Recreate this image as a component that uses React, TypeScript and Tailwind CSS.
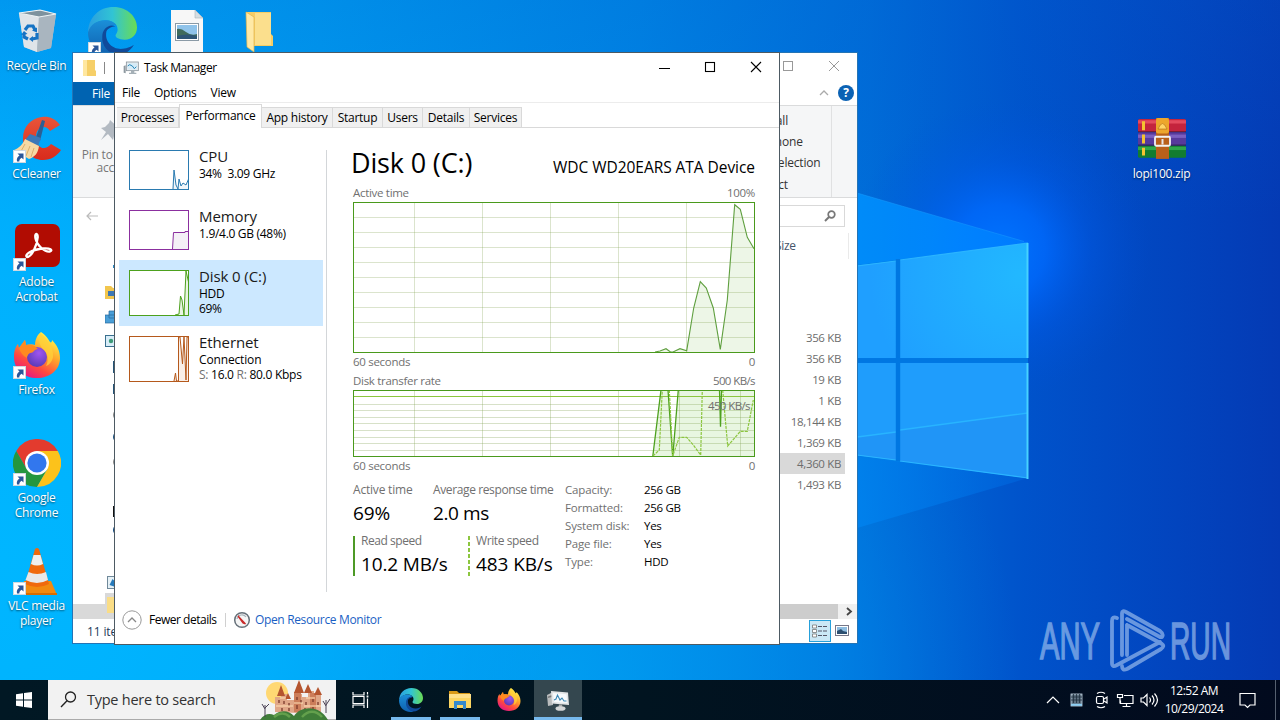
import type { ReactNode } from "react";

/* ---------- wallpaper ---------- */
function Wallpaper() {
  return (
    <svg className="absolute inset-0" width="1280" height="720" viewBox="0 0 1280 720">
      <defs>
        <linearGradient id="base" x1="0" x2="1" y1="0" y2="0">
          <stop offset="0" stopColor="#00a6f8" />
          <stop offset="0.25" stopColor="#009aef" />
          <stop offset="0.5" stopColor="#0084e4" />
          <stop offset="0.68" stopColor="#006cd8" />
          <stop offset="0.8" stopColor="#0053cb" />
          <stop offset="0.92" stopColor="#0244be" />
          <stop offset="1" stopColor="#043ab4" />
        </linearGradient>
        <radialGradient id="glow" gradientUnits="userSpaceOnUse" cx="1000" cy="250" r="150">
          <stop offset="0" stopColor="#0074ff" />
          <stop offset="0.3" stopColor="#006aff" stopOpacity="0.8" />
          <stop offset="0.6" stopColor="#005cf0" stopOpacity="0.35" />
          <stop offset="1" stopColor="#0050d8" stopOpacity="0" />
        </radialGradient>
        <radialGradient id="corner" gradientUnits="userSpaceOnUse" cx="0" cy="560" r="560">
          <stop offset="0" stopColor="#00b6ff" />
          <stop offset="0.5" stopColor="#00b4ff" stopOpacity="0.8" />
          <stop offset="1" stopColor="#00b0ff" stopOpacity="0" />
        </radialGradient>
        <radialGradient id="floor" gradientUnits="userSpaceOnUse" cx="560" cy="680" r="460">
          <stop offset="0" stopColor="#00a4f4" stopOpacity="0.75" />
          <stop offset="0.6" stopColor="#0098f0" stopOpacity="0.4" />
          <stop offset="1" stopColor="#0080e8" stopOpacity="0" />
        </radialGradient>
        <linearGradient id="topdark" x1="0" x2="0" y1="0" y2="1">
          <stop offset="0" stopColor="#0060d0" stopOpacity="0.2" />
          <stop offset="0.3" stopColor="#0060d0" stopOpacity="0" />
        </linearGradient>
        <linearGradient id="beam" gradientUnits="userSpaceOnUse" x1="780" y1="0" x2="1030" y2="0">
          <stop offset="0" stopColor="#0096ff" />
          <stop offset="0.6" stopColor="#008cff" />
          <stop offset="1" stopColor="#007cff" />
        </linearGradient>
        <linearGradient id="beamLow" gradientUnits="userSpaceOnUse" x1="780" y1="0" x2="1020" y2="0">
          <stop offset="0" stopColor="#008cf2" />
          <stop offset="1" stopColor="#0070e8" stopOpacity="0.4" />
        </linearGradient>
        <radialGradient id="pane" gradientUnits="userSpaceOnUse" cx="1020" cy="275" r="150">
          <stop offset="0" stopColor="#22b8ff" />
          <stop offset="1" stopColor="#1f9fff" />
        </radialGradient>
      </defs>
      <rect width="1280" height="720" fill="url(#base)" />
      <rect width="1280" height="720" fill="url(#topdark)" />
      <rect width="1280" height="720" fill="url(#floor)" />
      <rect width="1280" height="720" fill="url(#corner)" />
      <rect width="1280" height="720" fill="url(#glow)" />
      <path d="M780 170L857 193L1028 243L857 266H780z" fill="url(#beam)" opacity=".85" />
      <path d="M780 170L857 193L1024 241.500" stroke="#18a0ff" strokeOpacity=".5" fill="none" />
      <path d="M780 380L857 397L1028 478L857 528L780 550z" fill="url(#beamLow)" />
      <path d="M780 275L1028 243V478L780 447z" fill="#007fe8" />
      <path d="M780 274L896 261V358H780zM900 260L1028 243V358H900z" fill="url(#pane)" />
      <path d="M780 363H896V460L780 446zM900 363H1028V478L900 461z" fill="#1f9dfc" />
      <path d="M780 446L896 432V460L780 446zM900 430L1028 413V478L900 461z" fill="#218ff4" opacity=".6" />
      <path d="M857 437L896 432M900 430L1028 413" stroke="#28b4ff" strokeWidth="1.400" />
      <path d="M857 266L896 261M900 260L1028 243M900 461L1028 478M857 455L896 460" stroke="#2bb5ff" strokeWidth="1.200" />
      <path d="M857 360.500H1028M898 259V461" stroke="#0077e2" strokeWidth="4.400" />
      <path d="M1027.500 243V358M1027.500 363V479" stroke="#46d2ff" strokeWidth="2" />
    </svg>
  );
}

/* ---------- icons ---------- */
function Shortcut({ y = 31 }: { y?: number }) {
  return (
    <g transform={`translate(1 ${y})`}>
      <rect x="-.5" y="-.5" width="12" height="12" fill="#fff" stroke="#cfd8e0" />
      <path d="M3.500 2.500h6v6L7.600 6.700C6.200 7.500 5.300 8.500 5.300 10.500H3C2.300 7.700 3.700 5.500 5.500 4.500z" fill="#2a5699" />
    </g>
  );
}

function EdgeIcon({ size }: { size: number }) {
  return (
    <svg width={size} height={size} viewBox="0 0 48 48">
      <defs>
        <linearGradient id="eg1" x1="0" x2="1" y1="0" y2="0">
          <stop offset="0" stopColor="#2a9ee0" />
          <stop offset=".5" stopColor="#31c4d4" />
          <stop offset="1" stopColor="#6bdc52" />
        </linearGradient>
        <linearGradient id="eg2" x1="0" x2="0" y1="0" y2="1">
          <stop offset="0" stopColor="#1b8fd8" />
          <stop offset="1" stopColor="#0f5fae" />
        </linearGradient>
      </defs>
      <path d="M0 26C0 10 11 0 25 0s23 10 23 20c0 7-5 12-12 12-6 0-9-2-9-4 0-1.500 2-2.500 2-6 0-5-5-9-12-9C9 13 2 18 0 26z" fill="url(#eg1)" />
      <path d="M0 25C2 17 9 13 17 13c5 0 9 2 11 5-6-2-12 3-12 11 0 8 5 16 13 18-2 .7-4 1-6 1C10 48 0 38 0 25z" fill="url(#eg2)" />
      <path d="M18 24c-2 10 6 18 16 17 5-.5 8-2 11-4-4 7-10 10-16 10-9-1-16-9-15-18 0-7 6-13 13-10-4 0-8 2-9 5z" fill="#104a9a" />
    </svg>
  );
}

function FirefoxIcon({ size }: { size: number }) {
  return (
    <svg width={size} height={size} viewBox="0 0 48 48">
      <defs>
        <linearGradient id="ff1" x1=".8" x2=".25" y1=".1" y2="1">
          <stop offset="0" stopColor="#fff14a" />
          <stop offset=".35" stopColor="#ffa62b" />
          <stop offset=".68" stopColor="#ff4a3f" />
          <stop offset="1" stopColor="#e3128a" />
        </linearGradient>
        <radialGradient id="ff2" cx=".6" cy=".3" r=".8">
          <stop offset="0" stopColor="#a055f0" />
          <stop offset="1" stopColor="#5238b0" />
        </radialGradient>
      </defs>
      <path d="M28 0c5 3 7 7 9 10 1 1 2 0 2-2 5 5 8 11 8 18 0 12-10 20-23 20S1 38 1 25c0-7 2-11 4-13l1 4 6-8 1 5c4-1 7-1 9 0 0-5 2-10 6-13z" fill="url(#ff1)" />
      <circle cx="24" cy="25" r="10" fill="url(#ff2)" />
      <path d="M6 16l6-8 1 5c5-1 9 0 12 4-4 0-4 4-8 4-2 1-3 3-3 5-4-2-7-6-8-10z" fill="#ff8a1f" />
      <path d="M27 1c6 5 14 13 13 24-1 5-4 8-7 9 3-6 2-13-3-17-4-4-5-11-3-16z" fill="#ffd23a" opacity=".75" />
    </svg>
  );
}

function RecycleBin() {
  return (
    <svg width="48" height="48" viewBox="0 0 48 48">
      <path d="M6 5L27 2L43 6L38 40L24 44L11 39z" fill="#b9c6d0" />
      <path d="M6 5L26 8L24 44L11 39z" fill="#dfe4e9" />
      <path d="M26 8L43 6L38 40L24 44z" fill="#a9b5bf" />
      <path d="M6 5L27 2L43 6L26 9z" fill="#7e929e" stroke="#eef3f5" strokeWidth="1.200" />
      <g fill="none" stroke="#1673c4" strokeWidth="3.200">
        <path d="M12 22l3-4 5 0 2 4M24 25l0 5-5 1M15 31l-4-2 0-3" />
      </g>
      <path d="M19 22.500l5 2 0-5zM20 28v6l-4-3zM8 27l3-4 3.500 3z" fill="#1673c4" />
    </svg>
  );
}

function CCleaner() {
  return (
    <svg width="48" height="48" viewBox="0 0 48 48">
      <defs>
        <linearGradient id="cc" x1="0" x2="0" y1="0" y2="1">
          <stop offset="0" stopColor="#e8553a" />
          <stop offset="1" stopColor="#d92b1c" />
        </linearGradient>
      </defs>
      <path d="M47 9C42 2 35 0 29 1 18 2 10 11 10 22c0 13 9 22 20 22 8 0 14-4 18-10l-10-6c-4 5-9 5-12 2-4-4-4-14 0-17 4-3 8-3 11 2z" fill="url(#cc)" />
      <path d="M29 4l3 1-5 20-5-1z" fill="#2b5f94" />
      <path d="M17 18l11 4-3 8-13-6z" fill="#3c78b8" />
      <path d="M12 23l14 7c-1 7-4 11-10 13L1 34c5-2 9-6 11-11z" fill="#f6d9a4" />
      <path d="M12 28l-5 9M17 30l-4 10M21 32l-3 9" stroke="#dcaf6c" />
      <Shortcut y={35} />
    </svg>
  );
}

function Acrobat() {
  return (
    <svg width="48" height="48" viewBox="0 0 48 48">
      <rect x="2" y="0" width="45" height="43" rx="7" fill="#b10c02" />
      <path d="M14 33C11 31 18 26 29 24.500c9-1 11 2 8 3-5 1-13-6-14.500-13-1.200-6 2.500-6 2.200-1C24.300 20 19 33 14 33z" fill="none" stroke="#fff" strokeWidth="2.300" strokeLinejoin="round" />
      <Shortcut y={35} />
    </svg>
  );
}

function Chrome() {
  return (
    <svg width="48" height="48" viewBox="0 0 48 48">
      <path d="M3.200 12A24 24 0 0 1 44.800 12L24 12L13.600 30z" fill="#e33b2e" />
      <path d="M3.200 12A24 24 0 0 0 24 48L34.400 30L13.600 30z" fill="#24963f" />
      <path d="M44.800 12A24 24 0 0 1 24 48L34.400 30L24 12z" fill="#fcc21b" />
      <circle cx="24" cy="24" r="12" fill="#fff" />
      <circle cx="24" cy="24" r="9.600" fill="#3277ee" />
      <Shortcut y={35} />
    </svg>
  );
}

function Vlc() {
  return (
    <svg width="48" height="48" viewBox="0 0 48 48">
      <path d="M11 33H38L44 47H9z" fill="#f28a0f" />
      <path d="M6 45H44V47H6z" fill="#d96d00" />
      <path d="M22 1Q24-1 26 1L36 36Q24 42 12 36z" fill="#f0690c" />
      <path d="M20.500 7H27.500L30 16Q24 19 18 16z" fill="#efefef" />
      <path d="M15.500 24Q24 28 33 24L35 32Q24 38 12.500 32z" fill="#e8e8e8" />
      <Shortcut y={35} />
    </svg>
  );
}

function WinRar() {
  return (
    <svg className="mt-[2px]" width="50" height="42" viewBox="0 0 50 38" preserveAspectRatio="none">
      <rect x="1" y="1" width="48" height="12" rx="1.500" fill="#c4243d" />
      <rect x="1" y="2" width="48" height="3" fill="#e34a5e" />
      <rect x="1" y="13" width="48" height="12" rx="1.500" fill="#573a9c" />
      <rect x="1" y="15" width="48" height="3" fill="#7b5fc0" />
      <rect x="1" y="25" width="48" height="11" rx="1.500" fill="#127c2f" />
      <rect x="1" y="26" width="48" height="3" fill="#2fa64b" />
      <path d="M5 3h3v8H5zM5 15h3v8H5zM5 27h3v7H5z" fill="#f5c330" />
      <path d="M1 12.500H49M1 24.500H49" stroke="#23182f" strokeOpacity=".6" />
      <rect x="19" y="0" width="13" height="37" fill="#b9601a" />
      <rect x="19" y="0" width="13" height="14" rx="2" fill="#eda62c" />
      <path d="M21 10Q25.500 0 30 10z" fill="#ffd466" stroke="#b9741a" strokeWidth=".7" />
      <rect x="18" y="17" width="15" height="8" rx="1" fill="none" stroke="#f3f3f3" strokeWidth="1.800" />
      <path d="M25.500 19v5" stroke="#e7e7e7" strokeWidth="2" />
    </svg>
  );
}

function PictureFile() {
  return (
    <svg width="34" height="44" viewBox="0 0 34 44">
      <path d="M1 0H25L33 8V44H1z" fill="#f7f7f7" />
      <path d="M25 0V8H33z" fill="#d5dde2" stroke="#aab5bc" strokeWidth=".6" />
      <rect x="5.500" y="13.500" width="23" height="17" fill="#fff" stroke="#8a9aa6" />
      <rect x="7" y="15" width="20" height="14" fill="#8fc3ea" />
      <path d="M7 19q4-1 9 3t11 2v5H7z" fill="#3f6b5c" />
      <path d="M7 26q10-3 20 0v3H7z" fill="#2d5576" />
    </svg>
  );
}

function FolderTall() {
  return (
    <svg width="28" height="42" viewBox="0 0 28 42">
      <path d="M1 1H26V23L28 25V35H5z" fill="#f5cd66" />
      <path d="M10 2H26V34H10z" fill="#fbdf8d" />
      <path d="M1 1L9 6V41L2 36z" fill="#ffe9a6" stroke="#e2b54a" strokeWidth=".7" />
    </svg>
  );
}

function MonitorIcon({ size }: { size: number }) {
  return (
    <svg width={size} height={size} viewBox="0 0 24 24">
      <path d="M1 9L4 8V20L1 19z" fill="#8d989f" />
      <rect x="5" y="3" width="18" height="13" fill="#e9eef1" stroke="#87939b" strokeWidth="1.200" />
      <rect x="7" y="5" width="14" height="9" fill="#d4ebf7" />
      <path d="M7 9l3-2 4 2 3 4 3-3" fill="none" stroke="#2b87b8" strokeWidth="1.500" />
      <path d="M12 16h5v3h3v2H9v-2h3z" fill="#a5b0b7" />
    </svg>
  );
}

function TaskManagerTile() {
  return (
    <svg width="24" height="24" viewBox="0 0 24 24">
      <path d="M1 7L7 4V17L2 18z" fill="#b9bcbd" />
      <path d="M2 8.500L6 7V9L2 10z" fill="#77797a" />
      <path d="M5 3L22 4.500L23 17L6 15.500z" fill="#e3e5e6" />
      <path d="M7 5L20.500 6.200L21.200 15L8 14z" fill="#f7fafc" />
      <path d="M8 12l2-1 1.500-4 2.500 5 2-2 2 3 2.500 0" fill="none" stroke="#3b87b4" strokeWidth="1.100" />
      <path d="M13 16.500h3l.5 2.500h-4z" fill="#aaa" />
      <ellipse cx="14.500" cy="20.500" rx="5" ry="2.300" fill="#d4d6d7" />
    </svg>
  );
}

function ExplorerIcon() {
  return (
    <svg width="24" height="22" viewBox="0 0 24 22">
      <path d="M1 2H9L11 4H22V8H1z" fill="#d99a18" />
      <path d="M1 5H23V19H1z" fill="#fcd561" />
      <path d="M1 5H23V9H1z" fill="#ffe08a" />
      <path d="M6 20V12H18V20H15V16H9V20z" fill="#3488cc" />
    </svg>
  );
}

/* ---------- desktop ---------- */
function DesktopIcon({ place, label, children }: { place: string; label: ReactNode; children: ReactNode }) {
  return (
    <div className={`absolute flex w-[74px] flex-col items-center ${place}`}>
      <div className="flex h-[50px] items-start justify-center">{children}</div>
      <div className="pr-px text-center text-[12px] leading-[15px] tracking-[-0.25px] whitespace-nowrap text-white [text-shadow:0_1px_2px_rgba(0,0,0,.6)]">
        {label}
      </div>
    </div>
  );
}

/* ---------- file explorer ---------- */
const sizes = ["356 KB", "356 KB", "19 KB", "1 KB", "18,144 KB", "1,369 KB", "4,360 KB", "1,493 KB"];

function Explorer() {
  return (
    <div className="absolute top-[52px] left-[72px] flex h-[592px] w-[786px] flex-col border border-[#2474b5] bg-white text-[12px] text-[#333]">
      <div className="flex h-[29px] shrink-0 items-center">
        <svg className="ml-[9px]" width="15" height="18" viewBox="0 0 15 18">
          <path d="M1 1H13V11L14 12V17H1z" fill="#f6cf68" />
          <path d="M1 1H5V17H1z" fill="#ffe7a0" />
        </svg>
        <span className="ml-[7px] h-[12px] w-px bg-[#888]" />
        <span className="grow" />
        <svg className="mr-[15px] mb-[3px]" width="62" height="12" viewBox="0 0 62 12">
          <rect x="3.500" y="1.500" width="9" height="9" fill="none" stroke="#999" />
          <path d="M49 1l10 10M59 1l-10 10" stroke="#999" fill="none" />
        </svg>
      </div>
      <div className="flex h-[23px] shrink-0 items-center">
        <div className="flex h-full w-[56px] items-center justify-center bg-[#0063b1] tracking-[-0.2px] text-white">File</div>
        <span className="grow" />
        <svg className="mr-[9px] mb-px" width="10" height="6" viewBox="0 0 10 6">
          <path d="M1 5l4-4 4 4" fill="none" stroke="#aaa" strokeWidth="1.300" />
        </svg>
        <div className="mr-[3px] mb-px flex h-[16px] w-[16px] items-center justify-center rounded-full bg-[#0b62b4] text-[12px] font-bold text-white">?</div>
      </div>
      <div className="flex h-[93px] shrink-0 justify-between border-y border-[#dadbdc] bg-[#f5f6f7]">
        <div className="flex w-[82px] flex-col items-center pt-[13px] leading-[13px] tracking-[-0.2px] whitespace-nowrap text-[#777]">
          <svg className="mr-[6px] mb-[7px]" width="22" height="22" viewBox="0 0 22 22">
            <path d="M10 1l12 11-4 1-4 4-1 4-5-6-7 6 5-8-5-4 4-1 4-4z" fill="#b3bac2" />
          </svg>
          <span>Pin to Quick</span>
          <span>access</span>
        </div>
        <div className="mr-[25px] flex w-[100px] flex-col border-r border-[#e0e1e2] pt-[4px] tracking-[-0.2px] whitespace-nowrap">
          <span className="flex h-[22px] items-center pl-[9px]">Select all</span>
          <span className="flex h-[22px] items-center pl-[8px]">Select none</span>
          <span className="flex h-[22px] items-center pl-[6px]">Invert selection</span>
          <span className="flex h-[24px] items-center pl-[24px]">Select</span>
        </div>
      </div>
      <div className="flex h-[35px] shrink-0 items-center justify-between">
        <svg className="ml-[13px]" width="13" height="10" viewBox="0 0 13 10">
          <path d="M5 1L1 5l4 4M1 5h11" fill="none" stroke="#bbb" strokeWidth="1.200" />
        </svg>
        <div className="mr-[12px] flex h-[22px] w-[160px] items-center justify-end border border-[#d9d9d9] pr-[8px]">
          <svg width="12" height="12" viewBox="0 0 12 12">
            <circle cx="7.500" cy="4.500" r="3.300" fill="none" stroke="#777" strokeWidth="1.700" />
            <path d="M5 7L1 11" stroke="#777" strokeWidth="1.900" />
          </svg>
        </div>
      </div>
      <div className="flex h-[371px] shrink-0">
        <div className="flex w-[50px] flex-col items-end">
          <svg width="18" height="371" viewBox="0 0 18 371">
            <path d="M8 32h10v3H8z" fill="#2b8bc8" />
            <path d="M0 53h6l2 2h10v11H0z" fill="#f2c64e" />
            <path d="M3 58h15v8h-4v-3H3z" fill="#3d78b5" />
            <path d="M4 78h14v7H4zM0 82h14v8H0z" fill="#4a9fd8" stroke="#27689c" strokeWidth=".7" />
            <rect x=".5" y="102.500" width="16" height="11" fill="#d8edf8" stroke="#39708f" />
            <circle cx="6" cy="108" r="2.200" fill="#3d9a78" />
            <path d="M8 128h10v12H8zM8 151h10v10H8z" fill="#245376" />
            <circle cx="14" cy="182" r="6" fill="#888" />
            <circle cx="14" cy="204" r="6" fill="#174f80" />
            <circle cx="14" cy="229" r="6" fill="#888" />
            <circle cx="14" cy="250" r="5" fill="#3c7f88" />
            <path d="M8 273h10v11H8z" fill="#111" />
            <circle cx="14" cy="297" r="6" fill="#0d457c" />
            <circle cx="14" cy="328" r="5" fill="#999" />
            <rect x="2.500" y="343.500" width="14" height="12" fill="#e6f1f6" stroke="#70899a" />
            <path d="M4.500 352l3-6 3 3v5z" fill="#267abb" />
            <path d="M0 360h18v11H0z" fill="#d9d9d9" />
            <path d="M2 364h16v7H2z" fill="#fadd86" />
          </svg>
        </div>
        <div className="ml-auto flex w-[150px] flex-col tracking-[-0.2px]">
          <div className="mr-[8px] mb-[68px] flex h-[26px] items-center border-r border-[#eaeaea] text-[#44546a]">
            <span className="ml-[68px] tracking-[-0.35px]">Size</span>
          </div>
          {sizes.map((s, i) => (
            <div key={i} className={`mr-[12px] flex h-[21px] items-center justify-end pr-[4px] text-[11.5px] tracking-[-0.35px] text-[#6d6d6d] ${i === 6 ? "bg-[#d9d9d9]" : ""}`}>
              {s}
            </div>
          ))}
        </div>
      </div>
      <div className="flex h-[15px] shrink-0">
        <div className="w-[200px] bg-[#d9d9d9]">
          <div className="ml-[34px] h-[9px] w-[16px] bg-[#fadd86]" />
        </div>
        <div className="ml-auto w-[165px] bg-[#cdcdcd]" />
        <div className="flex w-[19px] items-center justify-center bg-[#f0f0f0] pl-[3px]">
          <svg width="7" height="9" viewBox="0 0 7 9">
            <path d="M1 1l4 3.500L1 8" fill="none" stroke="#444" strokeWidth="1.800" />
          </svg>
        </div>
      </div>
      <div className="flex grow items-center justify-between">
        <span className="pt-px pl-[14px] tracking-[-0.15px] text-[#1e395b]">11 items</span>
        <div className="flex items-center gap-[3px] pr-[7px]">
          <div className="flex h-[22px] w-[22px] items-center justify-center border border-[#26a0da] bg-[#cbe8f6]">
            <svg width="16" height="14" viewBox="0 0 16 14">
              <path d="M.5 1h4v3h-4zM.5 5.500h4v3h-4zM.5 10h4v3h-4z" fill="#fff" stroke="#777" strokeWidth=".8" />
              <path d="M6 2.500h4M11 2.500h4M6 7h4M11 7h4M6 11.500h4M11 11.500h4" stroke="#556" />
            </svg>
          </div>
          <svg width="16" height="12" viewBox="0 0 16 12">
            <rect x="1.500" y=".5" width="13" height="10" fill="#fff" stroke="#778" />
            <rect x="3" y="2" width="10" height="7" fill="#8fbde0" />
            <path d="M3 6l4-2 2 2 4 1v2H3z" fill="#2d4f70" />
          </svg>
        </div>
      </div>
    </div>
  );
}

/* ---------- task manager ---------- */
const tabs = [
  { name: "Processes", w: "w-[62px]" },
  { name: "Performance", w: "w-[83px]" },
  { name: "App history", w: "w-[71px]" },
  { name: "Startup", w: "w-[50px]" },
  { name: "Users", w: "w-[40px]" },
  { name: "Details", w: "w-[47px]" },
  { name: "Services", w: "w-[52px]" },
];

function Thumb({ h, color, fill, line }: { h: number; color: string; fill: string; line: string }) {
  return (
    <svg className="shrink-0" width="60" height={h} viewBox={`0 0 60 ${h}`}>
      <rect x=".5" y=".5" width="59" height={h - 1} fill="#fff" />
      <path d={`${line}V${h}H44z`} fill={fill} />
      <path d={line} fill="none" stroke={color} />
      <rect x=".5" y=".5" width="59" height={h - 1} fill="none" stroke={color} />
    </svg>
  );
}

function ActiveChart() {
  const line =
    "M302 150L307 149L313 146.700L317.500 150H320L327 146.700L333.700 148.700L340.700 106L347.300 79.700L353.300 86L360.300 106L367.300 147.300L374.300 98L381.700 2.700L387.300 7.300L394.300 35.300L401 46.700";
  return (
    <svg className="block" width="402" height="151" viewBox="0 0 402 151">
      <rect width="402" height="151" fill="#fff" />
      <path d={`${line}V150H302z`} fill="#edf6e7" />
      <path
        d="M0 15.500H401M0 30.500H401M0 45.500H401M0 60.500H401M0 75.500H401M0 90.500H401M0 105.500H401M0 120.500H401M0 135.500H401M61.500 0V150M129.500 0V150M197.500 0V150M265.500 0V150M333.500 0V150"
        stroke="#7a9a48"
        strokeOpacity=".27"
      />
      <path d={line} fill="none" stroke="#5f9f3f" strokeWidth="1.100" />
      <rect x=".5" y=".5" width="401" height="150" fill="none" stroke="#4a9a1c" />
    </svg>
  );
}

function TransferChart() {
  return (
    <div className="relative">
      <svg className="block" width="402" height="67" viewBox="0 0 402 67">
        <rect width="402" height="67" fill="#fff" />
        <path d="M300 67L308 0H315.500L319.700 67L325.500 0H366.500L367.500 36L368.500 0H402V67z" fill="#e8f6e1" />
        <path
          d="M0 14.500H401M0 20.500H401M0 27.500H401M0 33.500H401M0 40.500H401M0 47.500H401M0 53.500H401M0 60.500H401M61.500 0V66M129.500 0V66M197.500 0V66M265.500 0V66M326.500 0V66M387.500 0V66"
          stroke="#7a9a48"
          strokeOpacity=".3"
        />
        <path d="M0 6.500H401" stroke="#8cc63f" />
        <path d="M299.700 67L308 0M315 0L319.700 67L325.300 0M366.500 0L367.500 36.700L368.500 0" fill="none" stroke="#4da11e" strokeWidth="1.300" />
        <path
          d="M300 66L306.300 60L309.300 0M316.300 0L319.700 66L326.300 47.300H333.700L340.300 55L347.700 65L349.300 0M369.700 0L374.700 56L387.300 41.300H394.300L400.300 10"
          fill="none"
          stroke="#8cc63f"
          strokeWidth="1.200"
          strokeDasharray="3 1"
        />
        <rect x=".5" y=".5" width="401" height="66" fill="none" stroke="#4a9a1c" />
      </svg>
      <span className="absolute top-[8px] right-[5px] text-[11.5px] leading-[16px] tracking-[-0.6px] text-[#707070]">450 KB/s</span>
    </div>
  );
}

const facts = [
  ["Capacity:", "256 GB"],
  ["Formatted:", "256 GB"],
  ["System disk:", "Yes"],
  ["Page file:", "Yes"],
  ["Type:", "HDD"],
];

function Resource({ name, children, thumb, active, tall }: { name: string; children: ReactNode; thumb: ReactNode; active?: boolean; tall?: boolean }) {
  return (
    <div className={`flex w-[204px] pt-[10px] pl-[10px] ${tall ? "h-[66px]" : "h-[60px]"} ${active ? "bg-[#cce8ff]" : ""}`}>
      {thumb}
      <div className="-mt-[4px] ml-[10px] flex flex-col text-[12px] leading-[15px] tracking-[-0.3px] whitespace-nowrap text-black">
        <span className="text-[15px] leading-[20px] tracking-[-0.1px] text-[#1a1a1a]">{name}</span>
        {children}
      </div>
    </div>
  );
}

function TaskManager() {
  return (
    <div className="absolute top-[52px] left-[114px] flex h-[593px] w-[666px] flex-col border border-[#4d5a63] bg-white text-[12px] text-black">
      <div className="flex h-[30px] shrink-0 items-center pl-[8px]">
        <MonitorIcon size={16} />
        <span className="ml-[5px] tracking-[-0.45px]">Task Manager</span>
        <svg className="mr-[16px] mb-[2px] ml-auto" width="104" height="12" viewBox="0 0 104 12">
          <path d="M0 7.500h11" stroke="#000" />
          <rect x="46.500" y="1.500" width="9" height="9" fill="none" stroke="#000" strokeWidth="1.100" />
          <path d="M92 1l10 10M102 1L92 11" stroke="#000" strokeWidth="1.100" />
        </svg>
      </div>
      <div className="flex h-[20px] shrink-0 items-center gap-[14px] border-b border-[#ececec] pl-[7px] tracking-[-0.25px]">
        <span>File</span>
        <span>Options</span>
        <span>View</span>
      </div>
      <div className="flex h-[25px] shrink-0 items-end border-b border-[#d9d9d9] pl-[2px] tracking-[-0.25px]">
        {tabs.map((t, i) => (
          <div
            key={t.name}
            className={`flex shrink-0 items-center justify-center border border-b-0 border-[#d9d9d9] whitespace-nowrap ${t.w} ${
              i === 1 ? "-mb-px h-[24px] bg-white pb-px" : "h-[20px] border-l-0 bg-[#f0f0f0] pt-px"
            }`}
          >
            {t.name}
          </div>
        ))}
      </div>
      <div className="flex h-[466px] shrink-0">
        <div className="flex w-[211px] flex-col pt-[12px] pl-[4px]">
          <Resource name="CPU" thumb={<Thumb h={40} color="#2a7ab0" fill="#f1f6fa" line="M44 39L45 20L47 35L49 39L50 29L52 36L54 33L57 35L60 28" />}>
            <span>34%&nbsp; 3.09 GHz</span>
          </Resource>
          <Resource name="Memory" thumb={<Thumb h={40} color="#8b2f9f" fill="#f4f0f6" line="M43.500 39L44.500 22.500H56V21.500H60" />}>
            <span>1.9/4.0 GB (48%)</span>
          </Resource>
          <Resource name="Disk 0 (C:)" active tall thumb={<Thumb h={46} color="#4da11e" fill="#eaf5e3" line="M46 45L50 44L51.500 26L53 30L55 45L57 1L60 14" />}>
            <span>HDD</span>
            <span>69%</span>
          </Resource>
          <Resource name="Ethernet" tall thumb={<Thumb h={46} color="#b5591c" fill="#f9efe7" line="M45 45L46.500 37L47.500 45H49.500V1H51L53.500 28L55 1L57 44L58 1H60" />}>
            <span className="tracking-[-0.15px]">Connection</span>
            <span className="tracking-[-0.27px]">
              <span className="text-[#707070]">S:</span>&nbsp;16.0 <span className="text-[#707070]">R:</span>&nbsp;80.0 Kbps
            </span>
          </Resource>
        </div>
        <div className="mt-[22px] h-[442px] w-px shrink-0 bg-[#d3d6d9]" />
        <div className="ml-[26px] flex w-[402px] flex-col pt-[18px] tracking-[-0.3px] whitespace-nowrap text-[#707070]">
          <div className="flex h-[38px] items-baseline justify-between text-black">
            <span className="-ml-[2px] text-[27px] leading-[34px] tracking-[-0.15px]">Disk 0 (C:)</span>
            <span className="text-[15.5px] tracking-[-0.05px]">WDC WD20EARS ATA Device</span>
          </div>
          <div className="flex h-[18px] items-center justify-between text-[11.5px]">
            <span>Active time</span>
            <span>100%</span>
          </div>
          <ActiveChart />
          <div className="flex h-[18px] items-center justify-between text-[11.5px]">
            <span>60 seconds</span>
            <span>0</span>
          </div>
          <div className="flex h-[19px] items-center justify-between text-[11.5px]">
            <span>Disk transfer rate</span>
            <span className="tracking-[-0.6px]">500 KB/s</span>
          </div>
          <TransferChart />
          <div className="flex h-[18px] items-center justify-between text-[11.5px]">
            <span>60 seconds</span>
            <span>0</span>
          </div>
          <div className="flex pt-[6px]">
            <div className="flex w-[212px] flex-col">
              <div className="flex h-[50px]">
                <div className="flex w-[80px] flex-col">
                  <span className="leading-[18px] tracking-[-0.2px]">Active time</span>
                  <span className="text-[19px] leading-[28px] tracking-[-0.1px] text-black">69%</span>
                </div>
                <div className="flex flex-col">
                  <span className="leading-[18px] tracking-[-0.38px]">Average response time</span>
                  <span className="text-[19px] leading-[28px] tracking-[-0.4px] text-black">2.0 ms</span>
                </div>
              </div>
              <div className="flex pt-px">
                <div className="flex w-[115px]">
                  <span className="mt-[4px] h-[40px] w-[2px] bg-[#4d9a26]" />
                  <div className="ml-[6px] flex flex-col">
                    <span className="leading-[18px] tracking-[-0.45px]">Read speed</span>
                    <span className="text-[19px] leading-[28px] tracking-[-0.15px] text-black">10.2 MB/s</span>
                  </div>
                </div>
                <div className="flex">
                  <svg className="mt-[4px]" width="2" height="40" viewBox="0 0 2 40">
                    <path d="M1 0V40" stroke="#8cc63f" strokeWidth="2" strokeDasharray="4 2" />
                  </svg>
                  <div className="ml-[6px] flex flex-col">
                    <span className="leading-[18px] tracking-[-0.4px]">Write speed</span>
                    <span className="text-[19px] leading-[28px] tracking-[-0.1px] text-black">483 KB/s</span>
                  </div>
                </div>
              </div>
            </div>
            <div className="grid auto-rows-[18px] grid-cols-[79px_60px] items-center text-[11.5px]">
              {facts.map(([k, v]) => (
                <div key={k} className="contents">
                  <span className="tracking-[-0.15px]">{k}</span>
                  <span className="text-black">{v}</span>
                </div>
              ))}
            </div>
          </div>
        </div>
      </div>
      <div className="flex grow items-center pt-[2px] pl-[7px] tracking-[-0.35px]">
        <svg width="20" height="20" viewBox="0 0 20 20">
          <circle cx="10" cy="10" r="9.200" fill="none" stroke="#999" />
          <path d="M6 12l4-4 4 4" fill="none" stroke="#888" strokeWidth="1.300" />
        </svg>
        <span className="ml-[7px] w-[76px] tracking-[-0.48px] whitespace-nowrap">Fewer details</span>
        <span className="h-[14px] w-px bg-[#d0d0d0]" />
        <svg className="ml-[7px]" width="18" height="18" viewBox="0 0 18 18">
          <circle cx="9" cy="9" r="7.300" fill="#f5f5f5" stroke="#66717a" strokeWidth="1.500" />
          <path d="M4 8a5 5 0 0 1 9-2" fill="none" stroke="#a8b3ba" strokeWidth="1.200" />
          <path d="M5 5l7.500 8-2.500-1z" fill="#c92a2a" stroke="#c92a2a" strokeWidth="1.300" />
        </svg>
        <span className="ml-[4px] text-[#1a5fc4]">Open Resource Monitor</span>
      </div>
    </div>
  );
}

/* ---------- taskbar ---------- */
function Castle() {
  return (
    <svg width="74" height="40" viewBox="0 0 74 40">
      <circle cx="17" cy="13" r="11" fill="#ffd873" />
      <path d="M15 32V17h6v-3h6v6h7v-6h8v3h6v-6h6v4h7v19z" fill="#e0a687" />
      <path d="M34 12h7v20h-7zM50 13h6v20h-6z" fill="#cc7d5a" />
      <path d="M21 5l4 11h-8zM39 0l5 13H34zM48 4l4 9h-8zM58 7l4 8h-8zM28 13l3 6h-6z" fill="#b5552f" />
      <path d="M19 20v3M24 21v3M29 23v3M37 17v3M41 20v3M46 22v3M53 19v3M58 22v3M37 25v4M45 28v4M29 28v3M22 28v3M53 27v3" stroke="#7c3a2c" strokeWidth="1.300" />
      <path d="M16 26h17M34 23h9M44 26h17M20 18h6M46 18h9" stroke="#ffe1b8" strokeWidth="1.200" />
      <path d="M0 40c4-6 9-7 14-5 8-6 15-4 20 1 7-11 26-11 34 4z" fill="#3f7d38" />
      <path d="M14 37c6-5 12-4 16 0M42 37c6-7 14-7 20 0" fill="none" stroke="#63a04c" strokeWidth="2.500" />
      <path d="M5 37V25M5 29l-3-5M5 28l4-4M66 33V20M66 26l-3-5M66 25l4-6" stroke="#4b4255" />
    </svg>
  );
}

function Watermark() {
  return (
    <svg className="absolute top-[600px] left-[1030px]" width="216" height="78" viewBox="-4 -6 216 78" opacity=".62">
      <g fill="#a9c8f2" stroke="#a9c8f2" strokeWidth="1.500" fontFamily="'Liberation Sans Narrow','Liberation Sans',sans-serif" fontSize="51">
        <text x="6" y="53" textLength="60" lengthAdjust="spacingAndGlyphs">ANY</text>
        <text x="136" y="53" textLength="61" lengthAdjust="spacingAndGlyphs">RUN</text>
      </g>
      <g fill="none" stroke="#a9c8f2" strokeWidth="3.800" strokeLinejoin="round" strokeLinecap="round">
        <path d="M83 12Q78 10 78 15V57Q78 62 83 59L126 36" />
        <path d="M88 49V7Q88 4 92 6L126 25Q130 28 128 31L126 31L93 13" />
        <path d="M93 19V49M93 19L128 38Q131 40 127 43L93 63Q88 65 88 60" />
      </g>
    </svg>
  );
}

function Taskbar() {
  return (
    <div className="absolute inset-x-0 bottom-0 flex h-[40px] bg-linear-to-r from-[#011824] via-[#011420] to-[#020a1e] text-white">
      <div className="flex w-[48px] items-center justify-center">
        <svg width="16" height="16" viewBox="0 0 16 16">
          <path d="M0 2.300L7 1.200V7.500H0zM8 1L16 0V7.500H8zM0 8.500H7V14.800L0 13.700zM8 8.500H16V16L8 15z" fill="#fff" />
        </svg>
      </div>
      <div className="flex w-[288px] items-center border-b border-[#aaa] bg-[#f2f2f2] text-[#333]">
        <svg className="ml-[12px]" width="17" height="17" viewBox="0 0 17 17">
          <circle cx="10.500" cy="6" r="5" fill="none" stroke="#222" strokeWidth="1.300" />
          <path d="M7 9.800L1 16" stroke="#222" strokeWidth="1.400" />
        </svg>
        <span className="ml-[10px] pt-px text-[14.5px] tracking-[-0.25px] whitespace-nowrap">Type here to search</span>
        <span className="mr-[2px] ml-auto">
          <Castle />
        </span>
      </div>
      <div className="flex w-[51px] items-center justify-center pr-[3px]">
        <svg width="17" height="16" viewBox="0 0 17 16" fill="none" stroke="#fff" strokeWidth="1.200">
          <path d="M1 0V3H12V0M1 16V13H12V16M1 4.500H12V11.500H1zM15.500 0V16" />
          <path d="M14 3h3v3h-3z" fill="#fff" stroke="#011824" />
        </svg>
      </div>
      <div className="flex w-[49px] items-center justify-center pr-px">
        <div className="flex h-full w-[40px] items-center justify-center border-b-[3px] border-[#76b9ed] pt-[2px]">
          <EdgeIcon size={24} />
        </div>
      </div>
      <div className="flex w-[48px] items-center justify-center">
        <div className="flex h-full w-[40px] items-center justify-center border-b-[3px] border-[#76b9ed] pt-[2px]">
          <ExplorerIcon />
        </div>
      </div>
      <div className="flex w-[50px] items-center justify-center">
        <FirefoxIcon size={24} />
      </div>
      <div className="flex w-[48px] items-center justify-center border-b-[3px] border-[#76b9ed] bg-[#34474f] pt-[3px]">
        <TaskManagerTile />
      </div>
      <div className="ml-auto flex items-center">
        <svg width="114" height="20" viewBox="0 0 114 20" fill="none" stroke="#fff" strokeWidth="1.200">
          <path d="M1 13L7 7l6 6" />
          <rect x="25" y="4" width="11" height="12" fill="#5e7080" stroke="#c9dbe8" strokeWidth=".8" />
          <path d="M27.500 4v9M30.500 4v9M33.500 4v9M25 7h11M25 10h11" stroke="#1e2f3c" strokeWidth=".8" />
          <path d="M25 14.800h11" stroke="#8fd0f4" strokeWidth="2" />
          <rect x="50.500" y="6.500" width="7" height="7" rx="1.500" />
          <path d="M58 9l3-2v6l-3-2M51 3.500q4-2.500 8 0M51 16.500q4 2.500 8 0" />
          <path d="M78 5.500h9v8H74.500v-3M80.500 13.500v3M76.500 16.500h8M71.500 4.500h5v3h-5zM74 7.500v6" />
          <path d="M95 8h2.500L101 4.500v11L97.500 12H95zM103.500 7.500q2 2.500 0 5M106 5.500q4 4.500 0 9M108.500 3.500q6 6.500 0 13" />
        </svg>
        <div className="ml-[3px] flex w-[62px] flex-col items-center text-[12px] leading-[18px] tracking-[-0.5px] whitespace-nowrap">
          <span>12:52 AM</span>
          <span>10/29/2024</span>
        </div>
        <svg className="mr-[18px] ml-[14px]" width="18" height="18" viewBox="0 0 18 18" fill="none" stroke="#fff" strokeWidth="1.200">
          <path d="M1 2.500H16V14H11L8.500 16.500L6 14H1z" />
        </svg>
        <span className="mr-[4px] h-[40px] w-px bg-[#566070]" />
      </div>
    </div>
  );
}

export default function App() {
  return (
    <div className="relative h-[720px] w-[1280px] overflow-hidden font-['Open_Sans','Noto_Sans',sans-serif]">
      <Wallpaper />
      <DesktopIcon place="left-0 top-[8px]" label="Recycle Bin"><RecycleBin /></DesktopIcon>
      <DesktopIcon place="left-0 top-[116px]" label="CCleaner"><CCleaner /></DesktopIcon>
      <DesktopIcon place="left-0 top-[224px]" label={<>Adobe<br />Acrobat</>}><Acrobat /></DesktopIcon>
      <DesktopIcon place="left-0 top-[332px]" label="Firefox">
        <div className="relative">
          <FirefoxIcon size={48} />
          <svg className="absolute inset-0" width="48" height="48" viewBox="0 0 48 48"><Shortcut y={35} /></svg>
        </div>
      </DesktopIcon>
      <DesktopIcon place="left-0 top-[440px]" label={<>Google<br />Chrome</>}><div className="-mt-px"><Chrome /></div></DesktopIcon>
      <DesktopIcon place="left-0 top-[548px]" label={<>VLC media<br />player</>}><Vlc /></DesktopIcon>
      <DesktopIcon place="left-[75px] top-[7px]" label="">
        <div className="relative">
          <EdgeIcon size={49} />
          <svg className="absolute inset-0" width="48" height="48" viewBox="0 0 48 48"><Shortcut y={36} /></svg>
        </div>
      </DesktopIcon>
      <DesktopIcon place="left-[150px] top-[10px]" label=""><PictureFile /></DesktopIcon>
      <DesktopIcon place="left-[222px] top-[11px]" label=""><FolderTall /></DesktopIcon>
      <DesktopIcon place="left-[1125px] top-[116px]" label="lopi100.zip"><WinRar /></DesktopIcon>
      <Explorer />
      <TaskManager />
      <Watermark />
      <Taskbar />
    </div>
  );
}
